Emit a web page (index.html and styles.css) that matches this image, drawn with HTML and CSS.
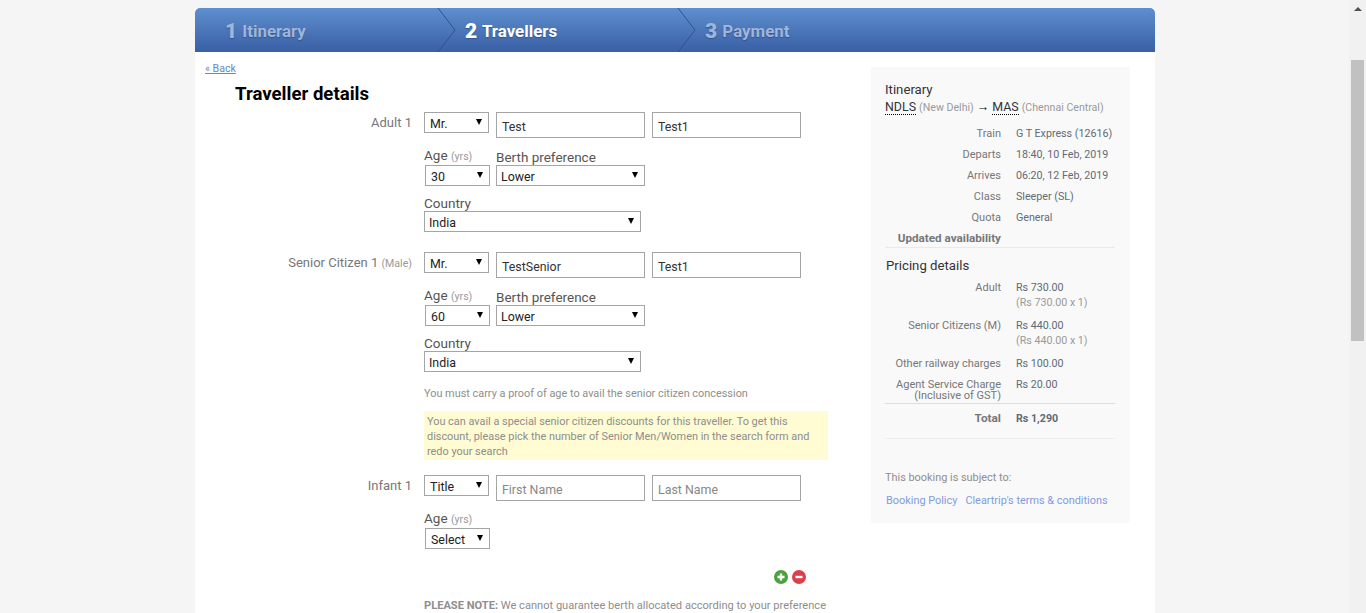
FILE: index.html
```html
<!DOCTYPE html>
<html lang="en">
<head>
    <meta charset="UTF-8">
    <meta name="viewport" content="width=device-width, initial-scale=1.0">
    <title>Traveller details</title>
    <link rel="stylesheet" href="styles.css">
</head>
<body>

    <div class="page">
        <div class="wrapper">
            <div class="steps">
                <div class="step step-first"><b>1</b> Itinerary
                    <svg class="chevron" width="19" height="44" viewBox="0 0 19 44"><path d="M1 0 L18 22 L1 44" fill="none" stroke="#2f5190" stroke-width="1"/></svg>
                </div>
                <div class="step active"><b>2</b> Travellers
                    <svg class="chevron" width="19" height="44" viewBox="0 0 19 44"><path d="M1 0 L18 22 L1 44" fill="none" stroke="#2f5190" stroke-width="1"/></svg>
                </div>
                <div class="step"><b>3</b> Payment</div>
            </div>

            <div class="content">
                <div class="form-col">
                    <a class="back" href="#">« Back</a>
                    <h1>Traveller details</h1>

                    <div class="traveller">
                        <div class="trav-label">Adult 1</div>
                        <div class="trav-fields">
                            <div class="name-row">
                                <div class="sel sel-title"><select><option>Mr.</option></select></div>
                                <input type="text" value="Test">
                                <input type="text" value="Test1">
                            </div>
                            <div class="age-row">
                                <div class="age-col">
                                    <label>Age <small>(yrs)</small></label>
                                    <div class="sel sel-title"><select><option>30</option></select></div>
                                </div>
                                <div class="berth-col">
                                    <label>Berth preference</label>
                                    <div class="sel sel-berth"><select><option>Lower</option></select></div>
                                </div>
                            </div>
                            <div class="country-row">
                                <label>Country</label>
                                <div class="sel sel-country"><select><option>India</option></select></div>
                            </div>
                        </div>
                    </div>

                    <div class="traveller">
                        <div class="trav-label">Senior Citizen 1 <small>(Male)</small></div>
                        <div class="trav-fields">
                            <div class="name-row">
                                <div class="sel sel-title"><select><option>Mr.</option></select></div>
                                <input type="text" value="TestSenior">
                                <input type="text" value="Test1">
                            </div>
                            <div class="age-row">
                                <div class="age-col">
                                    <label>Age <small>(yrs)</small></label>
                                    <div class="sel sel-title"><select><option>60</option></select></div>
                                </div>
                                <div class="berth-col">
                                    <label>Berth preference</label>
                                    <div class="sel sel-berth"><select><option>Lower</option></select></div>
                                </div>
                            </div>
                            <div class="country-row">
                                <label>Country</label>
                                <div class="sel sel-country"><select><option>India</option></select></div>
                            </div>
                            <p class="proof">You must carry a proof of age to avail the senior citizen concession</p>
                            <p class="discount">You can avail a special senior citizen discounts for this traveller. To get this discount, please pick the number of Senior Men/Women in the search form and redo your search</p>
                        </div>
                    </div>

                    <div class="traveller">
                        <div class="trav-label">Infant 1</div>
                        <div class="trav-fields">
                            <div class="name-row">
                                <div class="sel sel-title"><select><option>Title</option></select></div>
                                <input type="text" placeholder="First Name">
                                <input type="text" placeholder="Last Name">
                            </div>
                            <div class="age-row">
                                <div class="age-col">
                                    <label>Age <small>(yrs)</small></label>
                                    <div class="sel sel-title"><select><option>Select</option></select></div>
                                </div>
                            </div>
                        </div>
                    </div>

                    <div class="add-remove">
                        <svg width="14" height="14" viewBox="0 0 14 14"><circle cx="7" cy="7" r="7" fill="#4aa23f"/><path d="M7 3.5v7M3.5 7h7" stroke="#fff" stroke-width="2.4"/></svg>
                        <svg width="14" height="14" viewBox="0 0 14 14"><circle cx="7" cy="7" r="7" fill="#dd3f4e"/><path d="M3.5 7h7" stroke="#fff" stroke-width="2.4"/></svg>
                    </div>

                    <p class="please-note"><b>PLEASE NOTE:</b> We cannot guarantee berth allocated according to your preference</p>
                </div>

                <div class="side">
                    <h3>Itinerary</h3>
                    <p class="route"><abbr>NDLS</abbr> <small>(New Delhi)</small> <span class="route-arrow">→</span> <abbr>MAS</abbr> <small>(Chennai Central)</small></p>

                    <div class="info">
                        <div class="info-row"><span>Train</span><span>G T Express (12616)</span></div>
                        <div class="info-row"><span>Departs</span><span>18:40, 10 Feb, 2019</span></div>
                        <div class="info-row"><span>Arrives</span><span>06:20, 12 Feb, 2019</span></div>
                        <div class="info-row"><span>Class</span><span>Sleeper (SL)</span></div>
                        <div class="info-row"><span>Quota</span><span>General</span></div>
                        <div class="info-row strong"><span>Updated availability</span><span></span></div>
                    </div>

                    <h3 class="pricing-title">Pricing details</h3>
                    <div class="prices">
                        <div class="price-row tall"><span>Adult</span><span>Rs 730.00<small>(Rs 730.00 x 1)</small></span></div>
                        <div class="price-row tall"><span>Senior Citizens (M)</span><span>Rs 440.00<small>(Rs 440.00 x 1)</small></span></div>
                        <div class="price-row"><span>Other railway charges</span><span>Rs 100.00</span></div>
                        <div class="price-row agent"><span>Agent Service Charge<br>(Inclusive of GST)</span><span>Rs 20.00</span></div>
                        <div class="price-row total"><span>Total</span><span>Rs 1,290</span></div>
                    </div>

                    <p class="subject">This booking is subject to:</p>
                    <p class="policy"><a href="#">Booking Policy</a><a href="#">Cleartrip's terms &amp; conditions</a></p>
                </div>
            </div>
        </div>
    </div>

    <div class="scrollbar">
        <div class="arrow-up"></div>
        <div class="thumb"></div>
    </div>

</body>
</html>
```

FILE: styles.css
```css
* {
    box-sizing: border-box;
}
html, body {
    height: 100%;
    margin: 0;
    overflow: hidden;
}
body {
    display: flex;
    font-family: Roboto, Arial, sans-serif;
    font-size: 10.9px;
    color: #666;
    background-color: #f5f5f5;
}
.page {
    flex: 1;
    padding: 8px 0 0 195px;
    overflow: hidden;
}
.wrapper {
    width: 960px;
    height: 700px;
    background: white;
}

/* steps */
.steps {
    display: flex;
    height: 44px;
    border-radius: 5px 5px 0 0;
    background: linear-gradient(#5d8fce, #3a5fa5);
}
.step {
    position: relative;
    width: 240px;
    padding-left: 27px;
    line-height: 47px;
    font-size: 16.9px;
    font-weight: 700;
    color: #9fb5d9;
    text-shadow: 0 1px 1px #33558f;
}
.step b {
    font-size: 21px;
    margin-right: 1px;
    vertical-align: -1px;
}
.step-first {
    width: 243px;
    padding-left: 30px;
}
.step.active {
    color: white;
}
.chevron {
    position: absolute;
    top: 0;
    right: -18px;
}

.content {
    display: flex;
}
.form-col {
    width: 676px;
}

.back {
    display: block;
    margin: 10px 0 0 10px;
    font-size: 10.6px;
    line-height: 13px;
    color: #5b8bcc;
}
h1 {
    margin: 7px 0 6px 40px;
    font-size: 18.6px;
    line-height: 24px;
    font-weight: 700;
    color: black;
}

/* traveller blocks */
.traveller {
    display: flex;
    gap: 12px;
    margin-bottom: 15px;
}
.trav-label {
    width: 217px;
    padding-top: 2px;
    text-align: right;
    font-size: 13px;
    line-height: 17px;
    color: #777;
}
small {
    font-size: 10.6px;
    line-height: 1;
    color: #999;
}
.trav-fields {
    width: 404px;
}
.name-row {
    display: flex;
    gap: 7px;
    align-items: flex-start;
}
.name-row .sel {
    width: 65px;
}
input {
    width: 149px;
    height: 26px;
    padding: 2px 5px 0;
    border: 1px solid #a5a5a5;
    font-family: inherit;
    font-size: 12.4px;
    color: #333;
    background: white;
    outline: none;
}
input::placeholder {
    color: #888;
}

.sel {
    position: relative;
    height: 21px;
}
.sel::after {
    content: "";
    position: absolute;
    top: 7px;
    right: 7px;
    border-left: 3.5px solid transparent;
    border-right: 3.5px solid transparent;
    border-top: 6px solid black;
}
select {
    appearance: none;
    display: block;
    width: 100%;
    height: 100%;
    padding: 1px 4px 0;
    border: 1px solid #a5a5a5;
    border-radius: 0;
    font-family: inherit;
    font-size: 12.4px;
    color: #222;
    background: white;
}
.sel-title select {
    padding: 1px 5px 0;
}
.sel-title {
    width: 65px;
}
.sel-berth {
    width: 149px;
}
.sel-country {
    width: 217px;
}

label {
    display: block;
    font-size: 13.5px;
    line-height: 16px;
    color: #555;
}
.age-row {
    display: flex;
    gap: 6px;
    margin-top: 9px;
    align-items: flex-end;
}
.age-col .sel {
    margin-left: 1px;
}
.age-col label {
    margin-bottom: 2px;
}
.country-row {
    margin: 9px 0 5px;
}
.proof {
    margin: 14px 0 0;
    line-height: 16px;
    color: #8e8e8e;
}
.discount {
    margin: 9px 0 0;
    padding: 3px 3px 1px;
    line-height: 15px;
    color: #8e8e8e;
    background-color: #fffbd3;
}

.add-remove {
    display: flex;
    gap: 4px;
    justify-content: flex-end;
    width: 611px;
    margin-top: 21px;
}
.please-note {
    margin: 14px 0 0 229px;
    font-size: 11.1px;
    line-height: 16px;
    color: #8e8e8e;
}

/* itinerary sidebar */
.side {
    width: 259px;
    height: 456px;
    margin-top: 15px;
    padding: 14px 15px 0 14px;
    background-color: #f9f9f9;
}
h3 {
    margin: 0;
    font-size: 13.2px;
    line-height: 17px;
    font-weight: 400;
    color: #333;
}
.route {
    margin: 0;
    line-height: 17px;
    font-size: 12.4px;
    color: #333;
    white-space: nowrap;
}
.route-arrow {
    font-weight: 700;
    color: black;
}
abbr {
    border-bottom: 1px dotted black;
}
.info {
    margin-top: 8px;
    border-bottom: 1px solid #eaeaea;
}
.info-row, .price-row {
    display: flex;
    gap: 15px;
    line-height: 15px;
    font-size: 10.7px;
    white-space: nowrap;
}
.info-row {
    height: 21px;
    padding-top: 3px;
}
.info-row.strong {
    height: 19px;
}
.info-row span:first-child, .price-row span:first-child {
    width: 116px;
    flex-shrink: 0;
    text-align: right;
    font-size: 11px;
    color: #777;
}
.info-row span:last-child, .price-row span:last-child {
    color: #626a75;
}
.info-row.strong span:first-child {
    font-size: 11.7px;
    font-weight: 700;
}
.pricing-title {
    margin: 9px 0 0 1px;
}
.prices {
    margin-top: 3px;
}
.price-row {
    height: 21px;
    padding-top: 3px;
}
.price-row small {
    display: block;
    font-size: 10.7px;
    line-height: 15px;
}
.price-row.tall {
    height: 38px;
}
.price-row.agent {
    height: 30px;
    line-height: 11px;
    padding-top: 5px;
    border-bottom: 1px solid #ddd;
}
.price-row.total {
    height: 35px;
    padding-top: 7px;
    font-weight: 700;
    border-bottom: 1px solid #eee;
}
.price-row.total span:first-child {
    font-size: 11.8px;
}
.subject {
    margin: 31px 0 0;
    line-height: 16px;
    color: #8e8e8e;
}
.policy {
    display: flex;
    gap: 8px;
    margin: 7px 0 0;
    padding-left: 1px;
    line-height: 16px;
}
.policy a {
    color: #7f9ce0;
    text-decoration: none;
    white-space: nowrap;
}

/* page scrollbar */
.scrollbar {
    position: relative;
    width: 17px;
    flex-shrink: 0;
    background-color: #f1f1f1;
}
.arrow-up {
    position: absolute;
    top: 7px;
    left: 5px;
    border-left: 4px solid transparent;
    border-right: 4px solid transparent;
    border-bottom: 4px solid #505050;
}
.thumb {
    position: absolute;
    top: 60px;
    left: 2px;
    width: 13px;
    height: 281px;
    background-color: #c1c1c1;
}
```
